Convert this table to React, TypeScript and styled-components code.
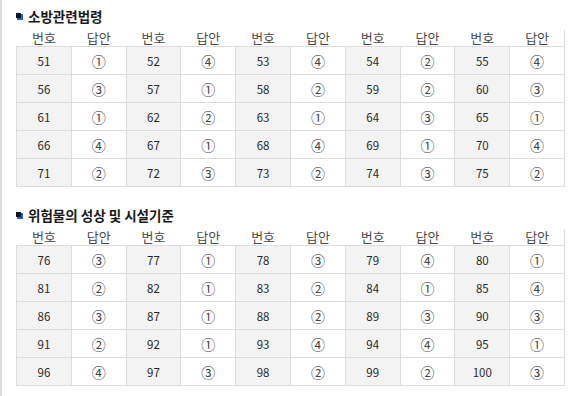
import styled, { createGlobalStyle } from "styled-components";

type Row = Array<[number, number]>;

interface ISection {
  title: string;
  rows: Array<Row>;
}

const CIRCLED = ["", "①", "②", "③", "④"];

const toRows = (start: number, answers: string): Array<Row> => {
  const rows: Array<Row> = [];
  for (let r = 0; r < 5; r++) {
    const row: Row = [];
    for (let c = 0; c < 5; c++) {
      const i = r * 5 + c;
      row.push([start + i, Number(answers[i])]);
    }
    rows.push(row);
  }
  return rows;
};

const SECTIONS: Array<ISection> = [
  {
    title: "소방관련법령",
    rows: toRows(51, "1442431223121314141423232")
  },
  {
    title: "위험물의 성상 및 시설기준",
    rows: toRows(76, "3134121214312332144143223")
  }
];

const GlobalStyle = createGlobalStyle`
  html, body {
    margin: 0;
    padding: 0;
    background: #ffffff;
  }

  body {
    font-family: "Noto Sans CJK KR", "Noto Sans", sans-serif;
  }
`;

const Page = styled.div`
  width: 576px;
  min-height: 396px;
  border-left: 2px solid #dcdcdc;
  padding-left: 14px;
  box-sizing: border-box;
`;

const Section = styled.section<{ $first?: boolean }>`
  padding-top: ${(p) => (p.$first ? "6px" : "18px")};
`;

const Title = styled.h3`
  margin: 0;
  height: 20px;
  display: flex;
  align-items: center;
  gap: 5px;
  font-size: 13.5px;
  font-weight: 700;
  color: #1a1a1a;
  line-height: 20px;
`;

const Bullet = styled.svg`
  width: 7px;
  height: 7px;
  flex-shrink: 0;
`;

const Grid = styled.div`
  display: grid;
  grid-template-columns: repeat(10, 1fr);
  width: 549px;
`;

const HeadRow = styled(Grid)`
  margin-top: 4px;
  height: 16px;
  padding-left: 1px;
  box-sizing: border-box;
`;

const HeadCell = styled.div<{ $last?: boolean }>`
  font-size: 13px;
  line-height: 16px;
  color: #4a4a4a;
  text-align: center;
  border-right: ${(p) => (p.$last ? "1px solid #dddddd" : "1px solid transparent")};
`;

const Body = styled(Grid)`
  border-top: 1px solid #dddddd;
  border-left: 1px solid #dddddd;
  box-sizing: border-box;
`;

const Cell = styled.div<{ $num?: boolean }>`
  height: 27px;
  display: flex;
  align-items: center;
  justify-content: center;
  border-right: 1px solid #dddddd;
  border-bottom: 1px solid #dddddd;
  background: ${(p) => (p.$num ? "#f3f3f3" : "#ffffff")};
  color: ${(p) => (p.$num ? "#2a2a2a" : "#444444")};
  font-size: ${(p) => (p.$num ? "11.5px" : "14px")};
`;

const SectionBlock = ({ section, first }: { section: ISection; first?: boolean }) => (
  <Section $first={first}>
    <Title>
      <Bullet viewBox="0 0 7 7">
        <rect x="1" y="1" width="6" height="6" fill="#1d62c4" />
        <rect x="0" y="0" width="5" height="5" fill="#0c1020" />
      </Bullet>
      {section.title}
    </Title>
    <HeadRow>
      {Array.from({ length: 10 }).map((_, i) => (
        <HeadCell key={i} $last={i === 9}>
          {i % 2 === 0 ? "번호" : "답안"}
        </HeadCell>
      ))}
    </HeadRow>
    <Body>
      {section.rows.map((row) =>
        row.map(([num, ans]) => [
          <Cell key={`n${num}`} $num>
            {num}
          </Cell>,
          <Cell key={`a${num}`}>{CIRCLED[ans]}</Cell>
        ])
      )}
    </Body>
  </Section>
);

const App = () => (
  <>
    <GlobalStyle />
    <Page>
      {SECTIONS.map((s, i) => (
        <SectionBlock key={s.title} section={s} first={i === 0} />
      ))}
    </Page>
  </>
);

export default App;
